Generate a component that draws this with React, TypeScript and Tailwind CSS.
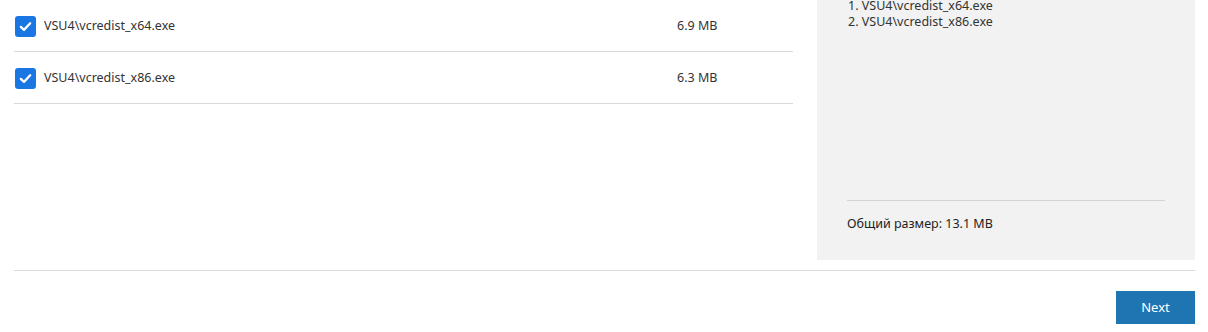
const files = [
  { name: 'VSU4\\vcredist_x64.exe', size: '6.9 MB' },
  { name: 'VSU4\\vcredist_x86.exe', size: '6.3 MB' },
];

function CheckBox() {
  return (
    <span className="flex h-[21px] w-[21px] shrink-0 items-center justify-center rounded-[3px] bg-[#1a76e3]">
      <svg viewBox="0 0 16 16" className="h-[15px] w-[15px]" fill="none">
        <path d="M3 8.4 6.4 11.6 13 4.6" stroke="white" strokeWidth="2.4" strokeLinecap="round" strokeLinejoin="round" />
      </svg>
    </span>
  );
}

export default function App() {
  return (
    <div
      className="h-[332px] w-[1208px] overflow-hidden bg-white text-[12.5px] text-[#333]"
      style={{ fontFamily: '"Noto Sans", "Open Sans", sans-serif' }}
    >
      <div className="flex gap-[24px] pl-[14px] pr-[13px]">
        <div className="w-[779px]">
          {files.map((f) => (
            <div key={f.name} className="flex h-[52px] items-center border-b border-[#d9d9d9] pl-px pt-px">
              <CheckBox />
              <span className="ml-[8px] w-[633px]">{f.name}</span>
              <span>{f.size}</span>
            </div>
          ))}
        </div>
        <div className="flex h-[260px] w-[378px] flex-col bg-[#f2f2f2] px-[30px]">
          <ol className="-mt-[2px] pl-px text-[12.5px] leading-[16px] text-[#333]">
            {files.map((f, i) => (
              <li key={f.name}>
                {i + 1}. {f.name}
              </li>
            ))}
          </ol>
          <div className="mt-auto border-t border-[#d4d4d4] pb-[28px] pt-[15px] text-[12.5px] leading-[16px] text-[#222]">
            Общий размер: 13.1 MB
          </div>
        </div>
      </div>
      <div className="ml-[14px] mr-[13px] mt-[10px] border-t border-[#d9d9d9]" />
      <div className="flex justify-end pr-[13px] pt-[20px]">
        <button className="h-[33px] w-[79px] bg-[#1f74b2] text-[13px] text-white">Next</button>
      </div>
    </div>
  );
}
